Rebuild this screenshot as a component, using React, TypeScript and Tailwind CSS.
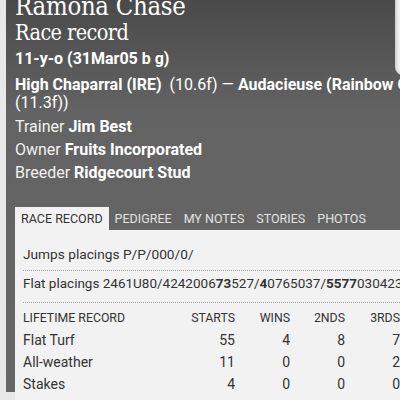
import React from "react";

const body = { fontFamily: "Roboto, 'Noto Sans', sans-serif" };
const serif = { fontFamily: "'DejaVu Serif', 'Liberation Serif', serif" };

type Row = { label: string; starts: number; wins: number; seconds: number; thirds: number };

const rows: Row[] = [
  { label: "Flat Turf", starts: 55, wins: 4, seconds: 8, thirds: 7 },
  { label: "All-weather", starts: 11, wins: 0, seconds: 0, thirds: 2 },
  { label: "Stakes", starts: 4, wins: 0, seconds: 0, thirds: 0 },
];

const tabs = ["RACE RECORD", "PEDIGREE", "MY NOTES", "STORIES", "PHOTOS"];

export default function App() {
  return (
    <div className="w-[400px] h-[400px] overflow-hidden bg-[#e8e8e8] pl-[6px]" style={body}>
      <div className="w-[520px] h-full bg-gradient-to-b from-[#484848] via-[#636363] via-30% to-[#666666] pl-[9px]">
        {/* header */}
        <div className="-mt-[7.6px] h-[191.6px]">
          <div className="float-right w-[131px] h-[83px] bg-[#f3f3f3] rounded-bl-[8px] shadow-[inset_2px_0_3px_rgba(0,0,0,0.15)]" />
          <div className="text-[25.5px] leading-[28px] tracking-[-0.3px] font-stretch-condensed text-white" style={serif}>
            Ramona Chase
          </div>
          <div className="text-[21.5px] leading-[26px] tracking-[-0.6px] font-stretch-condensed text-white" style={serif}>
            Race record
          </div>
          <div className="text-[16px] leading-[20px] font-bold text-white mt-[3px]">
            11-y-o (31Mar05 b g)
          </div>
          <div className="text-[16px] leading-[18.5px] text-white mt-[6.2px]">
            <span className="whitespace-nowrap">
              <b>High Chaparral (IRE)</b>&nbsp; (10.6f) — <b>Audacieuse (Rainbow Quest (USA)</b>
            </span>
            <br />
            (11.3f))
          </div>
          <div className="text-[16px] leading-[23px] text-[#f2f2f2] mt-[2.3px]">
            <div>Trainer <b className="text-white">Jim Best</b></div>
            <div>Owner <b className="text-white">Fruits Incorporated</b></div>
            <div>Breeder <b className="text-white">Ridgecourt Stud</b></div>
          </div>
        </div>

        {/* tabs */}
        <div className="flex mt-[23px] text-[12.5px] leading-[23px]">
          {tabs.map((t, i) => (
            <div
              key={t}
              className={
                i === 0
                  ? "px-[6px] bg-[#f2f2f2] text-[#333333]"
                  : "px-[6px] text-[#e2e2e2]"
              }
            >
              {t}
            </div>
          ))}
        </div>

        {/* race record */}
        <div className="bg-[#f2f2f2] h-[200px] pl-[8px] pt-[12.3px] text-[#333333]">
          <div className="text-[13.7px] leading-[24px] pb-[3.7px] border-b border-dotted border-[#a0a0a0]">
            Jumps placings P/P/000/0/
          </div>
          <div className="text-[13.5px] leading-[24px] pt-[0.3px] pb-[6.7px] border-b border-dotted border-[#a0a0a0] whitespace-nowrap">
            Flat placings 2461U80/4242006<b>73</b>527/<b>4</b>0765037/<b>5577</b>030423
          </div>
          <div className="grid grid-cols-[157px_55px_55px_55px_55px] mt-[3.8px]">
            <div className="text-[12.3px] leading-[22px]">LIFETIME RECORD</div>
            <div className="text-[12.3px] leading-[22px] text-right">STARTS</div>
            <div className="text-[12.3px] leading-[22px] text-right">WINS</div>
            <div className="text-[12.3px] leading-[22px] text-right">2NDS</div>
            <div className="text-[12.3px] leading-[22px] text-right">3RDS</div>
            {rows.map((r) => (
              <React.Fragment key={r.label}>
                <div className="text-[14px] leading-[22px]">{r.label}</div>
                <div className="text-[14px] leading-[22px] text-right">{r.starts}</div>
                <div className="text-[14px] leading-[22px] text-right">{r.wins}</div>
                <div className="text-[14px] leading-[22px] text-right">{r.seconds}</div>
                <div className="text-[14px] leading-[22px] text-right">{r.thirds}</div>
              </React.Fragment>
            ))}
          </div>
        </div>
      </div>
    </div>
  );
}
